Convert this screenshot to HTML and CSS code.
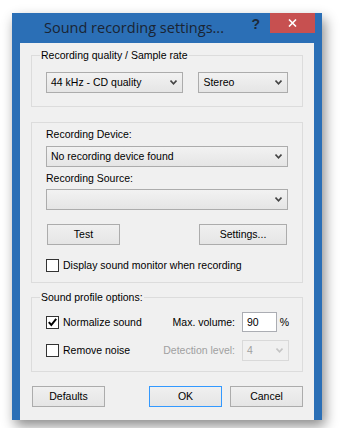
FILE: index.html
```html
<!DOCTYPE html>
<html lang="en">
<head>
    <meta charset="UTF-8">
    <meta name="viewport" content="width=device-width, initial-scale=1.0">
    <title>Sound recording settings</title>
    <link rel="stylesheet" href="styles.css">
</head>
<body>
    <div class="window">
        <div class="titlebar">
            <span class="title">Sound recording settings...</span>
            <span class="help">?</span>
            <span class="close">
                <svg width="9" height="8" viewBox="0 0 9 8"><path d="M1 0.5 L8 7.5 M8 0.5 L1 7.5" stroke="#fff" stroke-width="1.6"/></svg>
            </span>
        </div>

        <div class="client">
            <fieldset class="group group-quality">
                <legend>Recording quality / Sample rate</legend>
                <div class="row">
                    <div class="combo combo-rate">
                        <span>44 kHz - CD quality</span>
                        <svg class="arrow" width="7" height="5" viewBox="0 0 7 5"><path d="M0.5 0.5 L3.5 3.8 L6.5 0.5" fill="none" stroke="#444" stroke-width="1.6"/></svg>
                    </div>
                    <div class="combo combo-channels">
                        <span>Stereo</span>
                        <svg class="arrow" width="7" height="5" viewBox="0 0 7 5"><path d="M0.5 0.5 L3.5 3.8 L6.5 0.5" fill="none" stroke="#444" stroke-width="1.6"/></svg>
                    </div>
                </div>
            </fieldset>

            <div class="group group-device">
                <div class="label">Recording Device:</div>
                <div class="combo combo-wide">
                    <span>No recording device found</span>
                    <svg class="arrow" width="7" height="5" viewBox="0 0 7 5"><path d="M0.5 0.5 L3.5 3.8 L6.5 0.5" fill="none" stroke="#444" stroke-width="1.6"/></svg>
                </div>
                <div class="label label-source">Recording Source:</div>
                <div class="combo combo-wide">
                    <span></span>
                    <svg class="arrow" width="7" height="5" viewBox="0 0 7 5"><path d="M0.5 0.5 L3.5 3.8 L6.5 0.5" fill="none" stroke="#444" stroke-width="1.6"/></svg>
                </div>
                <div class="buttons-row">
                    <div class="button btn-test">Test</div>
                    <div class="button btn-settings">Settings...</div>
                </div>
                <div class="check-row monitor">
                    <span class="checkbox"></span>
                    <span>Display sound monitor when recording</span>
                </div>
            </div>

            <fieldset class="group group-profile">
                <legend>Sound profile options:</legend>
                <div class="profile-grid">
                    <div class="check-row">
                        <span class="checkbox">
                            <svg width="11" height="11" viewBox="0 0 11 11"><path d="M1.8 5.2 L4.3 8 L9.2 1.8" fill="none" stroke="#000" stroke-width="2"/></svg>
                        </span>
                        <span>Normalize sound</span>
                    </div>
                    <div class="field-label">Max. volume:</div>
                    <div class="volume">
                        <div class="textbox">90</div>
                        <span class="percent">%</span>
                    </div>

                    <div class="check-row">
                        <span class="checkbox"></span>
                        <span>Remove noise</span>
                    </div>
                    <div class="field-label disabled">Detection level:</div>
                    <div class="combo combo-disabled">
                        <span>4</span>
                        <svg class="arrow" width="7" height="5" viewBox="0 0 7 5"><path d="M0.5 0.5 L3.5 3.8 L6.5 0.5" fill="none" stroke="#c4c4c4" stroke-width="1.6"/></svg>
                    </div>
                </div>
            </fieldset>

            <div class="footer">
                <div class="button">Defaults</div>
                <div class="button btn-ok">OK</div>
                <div class="button">Cancel</div>
            </div>
        </div>
    </div>
</body>
</html>
```

FILE: styles.css
```css
/* page */
body {
    margin: 0;
    padding: 13px 0 0 12px;
    background-color: #ffffff;
    font-family: "Liberation Sans", Arial, sans-serif;
    font-size: 10.5px;
    line-height: 13px;
    color: #000;
}

/* window frame */
.window {
    width: 310px;
    background-color: #2b6fb6;
    box-shadow: 3px 6px 12px rgba(0, 0, 0, 0.45);
}
.titlebar {
    height: 30px;
    display: flex;
    align-items: flex-start;
}
.title {
    margin: 5px 0 0 32px;
    font-family: "Open Sans", sans-serif;
    font-size: 14.5px;
    line-height: 20px;
    color: #1a2433;
    flex: 1;
}
.help {
    margin: 3px 10px 0 0;
    font-family: "Liberation Sans", sans-serif;
    font-weight: bold;
    font-size: 14px;
    line-height: 16px;
    color: #1c2a3a;
}
.close {
    width: 45px;
    height: 20px;
    margin-right: 7px;
    background-color: #c75050;
    display: flex;
    align-items: center;
    justify-content: center;
}

.client {
    margin: 0 8px 8px 8px;
    height: 377px;
    box-sizing: border-box;
    background-color: #f0f0f0;
    padding: 5px 11px 0 11px;
}

/* group boxes */
.group {
    margin: 0;
    border: 1px solid #dcdcdc;
    box-sizing: border-box;
    width: 272px;
    min-width: 0;
}
legend {
    padding: 0 1px;
    margin-left: -6px;
    line-height: 14px;
}
.group-quality {
    padding: 10px 14px 13px 14px;
}
.group-quality .row {
    display: flex;
    gap: 15px;
}
.group-device {
    margin-top: 15px;
    padding: 5px 14px 10px 14px;
}
.group-profile {
    margin-top: 7px;
    padding: 8px 13px 10px 14px;
}

.label {
    margin-bottom: 5px;
}
.label-source {
    margin-top: 5px;
    margin-bottom: 4px;
}

/* combo boxes */
.combo {
    height: 21px;
    box-sizing: border-box;
    border: 1px solid #acacac;
    background: linear-gradient(#f2f2f2, #e5e5e5);
    display: flex;
    align-items: center;
    justify-content: space-between;
    padding: 0 5px 0 4px;
}
.combo .arrow {
    flex: none;
}
.combo-rate {
    width: 138px;
}
.combo-channels {
    width: 90px;
}
.combo-wide {
    width: 242px;
}
.combo-disabled {
    width: 47px;
    border-color: #d9d9d9;
    background: #f0f0f0;
    color: #a0a0a0;
}

/* push buttons */
.button {
    width: 73px;
    height: 21px;
    box-sizing: border-box;
    border: 1px solid #acacac;
    background: linear-gradient(#f0f0f0, #e5e5e5);
    display: flex;
    align-items: center;
    justify-content: center;
}
.buttons-row {
    margin-top: 14px;
    display: flex;
    justify-content: space-between;
    padding: 0 1px;
}
.btn-settings {
    width: 88px;
}
.btn-ok {
    margin-left: auto;
    margin-right: 8px;
    border-color: #3399ff;
}

/* check boxes */
.check-row {
    display: flex;
    align-items: center;
    gap: 4px;
}
.checkbox {
    width: 13px;
    height: 13px;
    box-sizing: border-box;
    border: 1px solid #333;
    background-color: #fff;
    display: flex;
    align-items: center;
    justify-content: center;
}
.monitor {
    margin-top: 14px;
}

/* sound profile */
.profile-grid {
    display: grid;
    grid-template-columns: 1fr auto 47px;
    grid-template-rows: 20px 21px;
    row-gap: 8px;
    column-gap: 7px;
    align-items: center;
}
.field-label {
    text-align: right;
}
.disabled {
    color: #a0a0a0;
}
.volume {
    display: flex;
    align-items: center;
    gap: 3px;
}
.textbox {
    width: 38px;
    height: 20px;
    box-sizing: border-box;
    border: 1px solid #abadb3;
    background-color: #fff;
    padding: 0 4px;
    display: flex;
    align-items: center;
}

/* bottom buttons */
.footer {
    margin-top: 14px;
    display: flex;
    padding-left: 1px;
}
```
